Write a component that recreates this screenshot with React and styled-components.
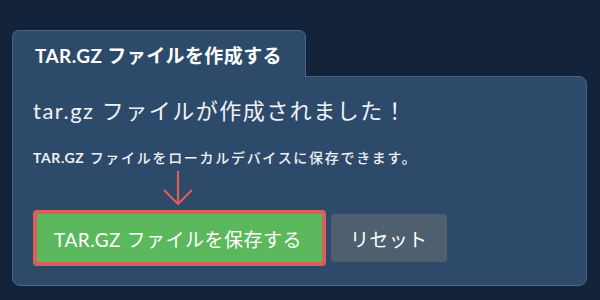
import React from 'react';
import styled, { createGlobalStyle } from 'styled-components';

const GlobalStyle = createGlobalStyle`
	html, body {
		margin: 0;
		padding: 0;
		background: #12233a;
	}
	body {
		font-family: 'Lato', 'Noto Sans CJK JP', sans-serif;
		color: #ffffff;
	}
`;

const Page = styled.div`
	width: 600px;
	height: 300px;
	box-sizing: border-box;
	padding: 30px 13px 0 12px;
`;

const Tab = styled.div`
	position: relative;
	z-index: 1;
	width: 294px;
	height: 47px;
	box-sizing: border-box;
	margin-bottom: -1px;
	padding-left: 22px;
	display: flex;
	align-items: center;
	background: #2e4a6a;
	border: 1px solid #4b6586;
	border-bottom: none;
	border-radius: 7px 7px 0 0;
	font-size: 19px;
	font-weight: 700;
	letter-spacing: 0.4px;
`;

const Panel = styled.section`
	height: 210px;
	box-sizing: border-box;
	padding: 19px 20px 0 20px;
	background: #2e4a6a;
	border: 1px solid #4b6586;
	border-radius: 0 8px 8px 8px;
`;

const Heading = styled.h2`
	margin: 0;
	font-size: 22px;
	font-weight: 400;
	line-height: 30px;
	letter-spacing: 1.5px;
	color: #eef2f6;
`;

const Note = styled.p`
	margin: 22px 0 0 0;
	font-size: 14px;
	font-weight: 500;
	line-height: 20px;
	letter-spacing: 1.7px;
	color: #eef2f6;

	strong {
		font-weight: 700;
		letter-spacing: 0.6px;
	}
`;

const ArrowBox = styled.div`
	height: 42px;
	padding-left: 129px;
	display: flex;
	align-items: flex-start;
`;

const Actions = styled.div`
	display: flex;
	align-items: center;
	gap: 5px;
`;

const SaveButton = styled.button`
	height: 56px;
	padding: 0 20px 0 17px;
	font-family: inherit;
	font-size: 19px;
	letter-spacing: 0.5px;
	color: #ffffff;
	background: #5cb85c;
	border: 4px solid #d9605a;
	border-radius: 4px;
`;

const ResetButton = styled.button`
	height: 48px;
	padding: 0 19px;
	font-family: inherit;
	font-size: 19px;
	letter-spacing: 0.4px;
	color: #ffffff;
	background: #4f5f70;
	border: none;
	border-radius: 4px;
`;

const DownArrow = () => (
	<svg width="32" height="38" viewBox="0 0 32 38" fill="none">
		<path
			d="M16 3 V36 M2 22 L16 36 L30 22"
			stroke="#d9605a"
			strokeWidth="2.2"
		/>
	</svg>
);

export default function App() {
	return (
		<>
			<GlobalStyle />
			<Page>
				<Tab>TAR.GZ ファイルを作成する</Tab>
				<Panel>
					<Heading>tar.gz ファイルが作成されました！</Heading>
					<Note>
						<strong>TAR.GZ</strong> ファイルをローカルデバイスに保存できます。
					</Note>
					<ArrowBox>
						<DownArrow />
					</ArrowBox>
					<Actions>
						<SaveButton>TAR.GZ ファイルを保存する</SaveButton>
						<ResetButton>リセット</ResetButton>
					</Actions>
				</Panel>
			</Page>
		</>
	);
}
